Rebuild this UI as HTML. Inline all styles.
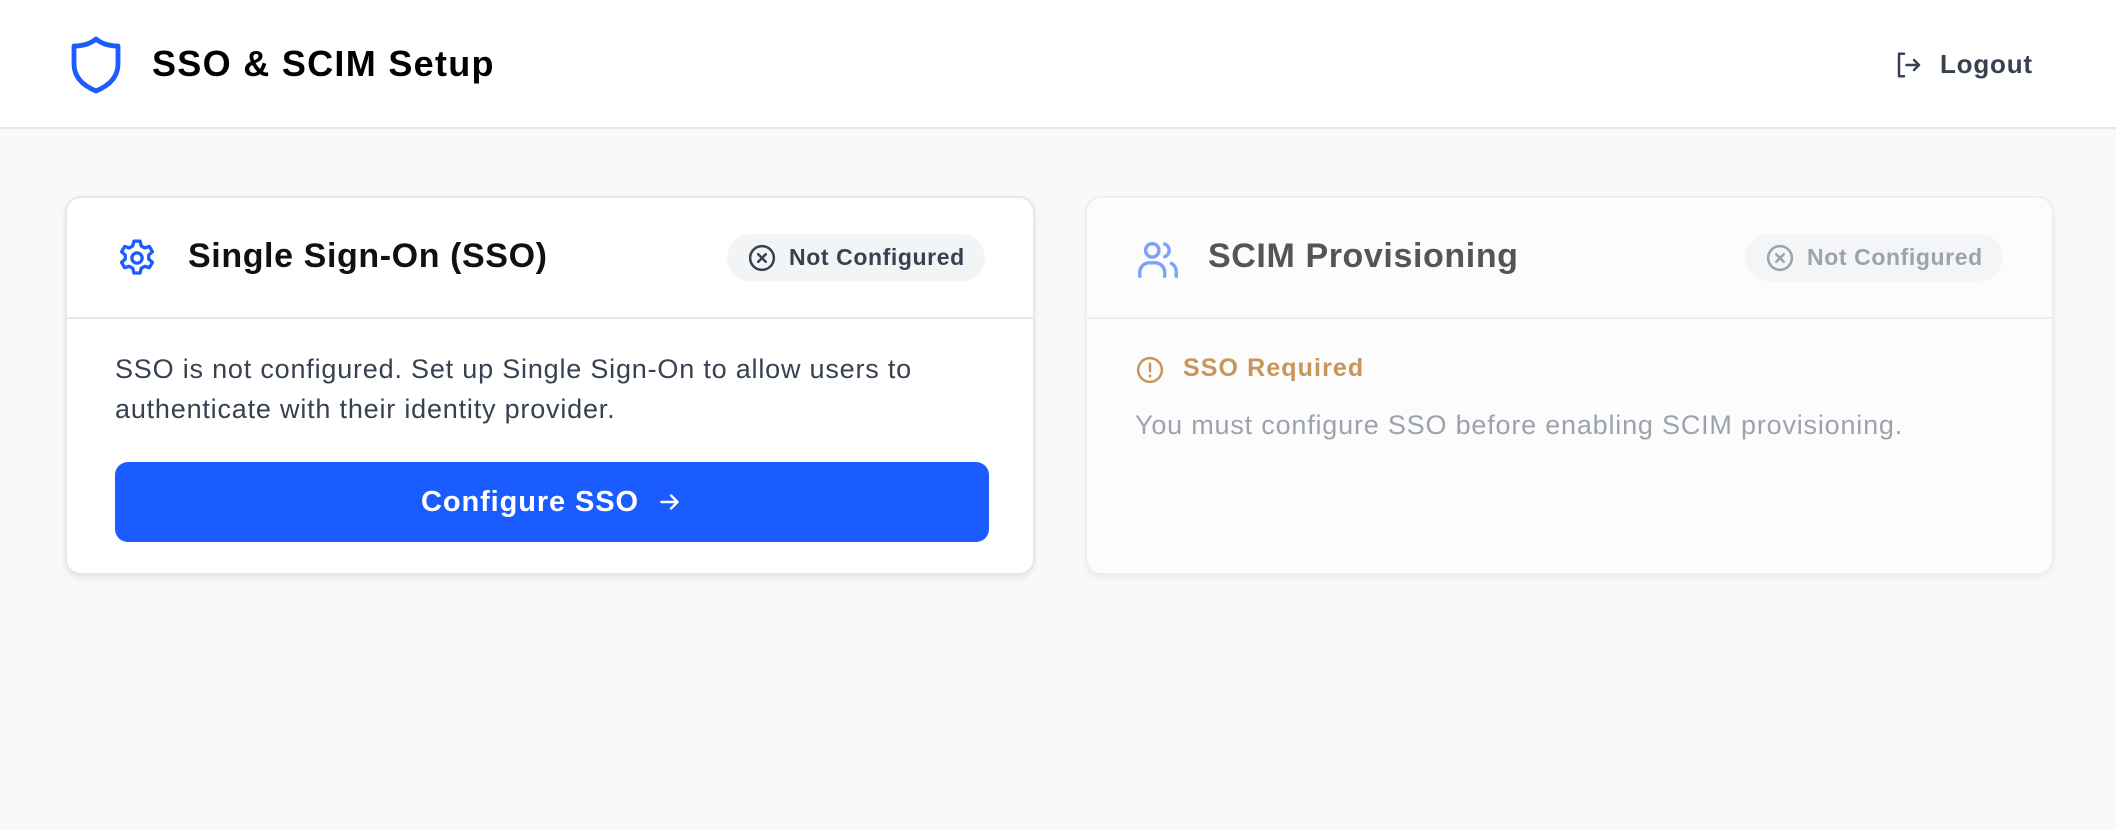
<!DOCTYPE html>
<html><head><meta charset="utf-8"><style>
*{box-sizing:border-box;margin:0;padding:0}
body{width:2116px;height:830px;background:#f8f9fa;font-family:"Liberation Sans",sans-serif;overflow:hidden;position:relative}
.hdr{position:absolute;left:0;top:0;width:2116px;height:129px;background:#fff;border-bottom:2px solid #e5e7eb}
.card{position:absolute;top:196px;width:970px;height:379px;background:#fff;border:2px solid #e5e7eb;border-radius:16px;box-shadow:0 3px 6px rgba(0,0,0,.08)}
.ch{height:121px;border-bottom:2px solid #e5e7eb;position:relative}
.badge{position:absolute;top:36px;height:47px;border-radius:24px;background:#f3f4f6;display:flex;align-items:center;padding:0 20px;font-size:23px;font-weight:bold;color:#374151;letter-spacing:.6px}
.badge svg{margin-right:12px}
.title{position:absolute;left:121px;top:39px;font-size:34px;font-weight:bold;color:#111;letter-spacing:.6px}
</style></head><body>
<div class="hdr">
<svg style="position:absolute;left:70px;top:36px" width="52" height="58" viewBox="0 0 26 29" fill="none" stroke="#1a5cff" stroke-width="2.4" stroke-linejoin="round"><path d="M13 1.5 C10 4 6 5 2 5 V14 C2 21 7 25 13 27.5 C19 25 24 21 24 14 V5 C20 5 16 4 13 1.5Z"/></svg>
<div style="position:absolute;left:152px;top:43px;font-size:36px;font-weight:bold;color:#000;letter-spacing:1.3px">SSO &amp; SCIM Setup</div>
<svg style="position:absolute;left:1894px;top:50px" width="30" height="30" viewBox="0 0 24 24" fill="none" stroke="#374151" stroke-width="2" stroke-linecap="round" stroke-linejoin="round"><path d="M8 3H4v18h4"/><path d="M10 12h10M16 8l4 4-4 4"/></svg>
<div style="position:absolute;left:1940px;top:49px;font-size:26px;font-weight:bold;color:#374151;letter-spacing:.8px">Logout</div>
</div>

<div class="card" style="left:65px">
<div class="ch">
<svg style="position:absolute;left:48px;top:38px" width="44" height="44" viewBox="0 0 24 24" fill="none" stroke="#1a5cff" stroke-width="1.8" stroke-linejoin="round"><path d="M10.3 2.8h3.4l.6 2.6 1.9 1.1 2.5-.8 1.7 2.9-2 1.8v2.2l2 1.8-1.7 2.9-2.5-.8-1.9 1.1-.6 2.6h-3.4l-.6-2.6-1.9-1.1-2.5.8-1.7-2.9 2-1.8v-2.2l-2-1.8 1.7-2.9 2.5.8 1.9-1.1z"/><circle cx="12" cy="12" r="2.8"/></svg>
<div class="title">Single Sign-On (SSO)</div>
<div class="badge" style="left:660px"><svg width="30" height="30" viewBox="0 0 24 24" fill="none" stroke="#374151" stroke-width="2" stroke-linecap="round"><circle cx="12" cy="12" r="9.5"/><path d="M9 9l6 6M15 9l-6 6"/></svg>Not Configured</div>
</div>
<div style="position:absolute;left:48px;top:151px;width:880px;font-size:27px;line-height:40px;color:#374151;letter-spacing:.8px">SSO is not configured. Set up Single Sign-On to allow users to authenticate with their identity provider.</div>
<div style="position:absolute;left:48px;top:264px;width:874px;height:80px;background:#1a5cff;border-radius:13px;color:#fff;font-size:29px;font-weight:bold;display:flex;align-items:center;justify-content:center;letter-spacing:.9px">Configure SSO<svg style="margin-left:18px" width="26" height="26" viewBox="0 0 24 24" fill="none" stroke="#fff" stroke-width="2.2" stroke-linecap="round" stroke-linejoin="round"><path d="M4 12h15M13 6l6 6-6 6"/></svg></div>
</div>

<div class="card" style="left:1085px;width:969px;background:#fcfcfc;border-color:#eceef1;box-shadow:0 3px 6px rgba(0,0,0,.05)">
<div class="ch" style="border-color:#eceef1">
<svg style="position:absolute;left:48px;top:38px" width="46" height="46" viewBox="0 0 24 24" fill="none" stroke="#7ea2fb" stroke-width="1.8" stroke-linecap="round"><circle cx="9" cy="7.5" r="3.5"/><path d="M2.5 21v-2a5 5 0 0 1 5-5h3a5 5 0 0 1 5 5v2"/><path d="M15.5 4.2a3.5 3.5 0 0 1 0 6.6M19 14.3a5 5 0 0 1 2.5 4.7v2"/></svg>
<div class="title" style="color:#555">SCIM Provisioning</div>
<div class="badge" style="left:658px;background:#f4f5f6;color:#9ca3af"><svg width="30" height="30" viewBox="0 0 24 24" fill="none" stroke="#9ca3af" stroke-width="2" stroke-linecap="round"><circle cx="12" cy="12" r="9.5"/><path d="M9 9l6 6M15 9l-6 6"/></svg>Not Configured</div>
</div>
<svg style="position:absolute;left:48px;top:157px" width="30" height="30" viewBox="0 0 24 24" fill="none" stroke="#c8955a" stroke-width="2" stroke-linecap="round"><circle cx="12" cy="12" r="9.5"/><path d="M12 7v6M12 16.5v.5"/></svg>
<div style="position:absolute;left:96px;top:156px;font-size:25px;font-weight:bold;color:#c8955a;letter-spacing:1.1px">SSO Required</div>
<div style="position:absolute;left:48px;top:212px;font-size:27px;color:#9ca3af;letter-spacing:.8px">You must configure SSO before enabling SCIM provisioning.</div>
</div>
</body></html>
